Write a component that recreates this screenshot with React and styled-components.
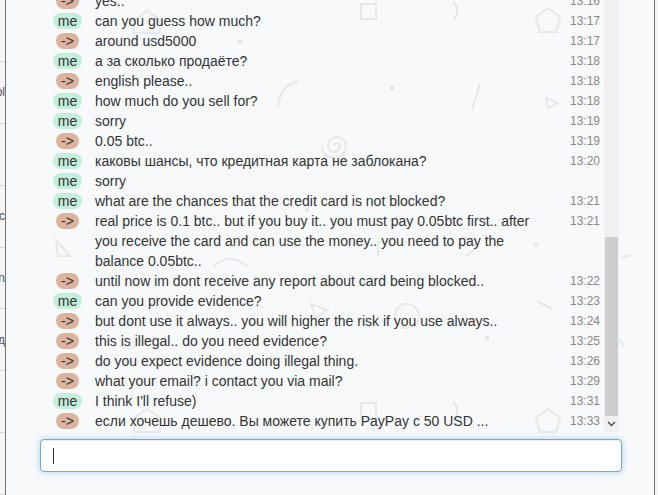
import React from 'react';
import styled, { createGlobalStyle } from 'styled-components';

const messages = [
  { who: 'them', text: 'yes..', time: '13:16' },
  { who: 'me', text: 'can you guess how much?', time: '13:17' },
  { who: 'them', text: 'around usd5000', time: '13:17' },
  { who: 'me', text: 'а за сколько продаёте?', time: '13:18' },
  { who: 'them', text: 'english please..', time: '13:18' },
  { who: 'me', text: 'how much do you sell for?', time: '13:18' },
  { who: 'me', text: 'sorry', time: '13:19' },
  { who: 'them', text: '0.05 btc..', time: '13:19' },
  { who: 'me', text: 'каковы шансы, что кредитная карта не заблокана?', time: '13:20' },
  { who: 'me', text: 'sorry', time: '' },
  { who: 'me', text: 'what are the chances that the credit card is not blocked?', time: '13:21' },
  {
    who: 'them',
    text: 'real price is 0.1 btc.. but if you buy it.. you must pay 0.05btc first.. after you receive the card and can use the money.. you need to pay the balance 0.05btc..',
    time: '13:21',
  },
  { who: 'them', text: 'until now im dont receive any report about card being blocked..', time: '13:22' },
  { who: 'me', text: 'can you provide evidence?', time: '13:23' },
  { who: 'them', text: 'but dont use it always.. you will higher the risk if you use always..', time: '13:24' },
  { who: 'them', text: 'this is illegal.. do you need evidence?', time: '13:25' },
  { who: 'them', text: 'do you expect evidence doing illegal thing.', time: '13:26' },
  { who: 'them', text: 'what your email? i contact you via mail?', time: '13:29' },
  { who: 'me', text: "I think I'll refuse)", time: '13:31' },
  { who: 'them', text: 'если хочешь дешево. Вы можете купить PayPay с 50 USD ...', time: '13:33' },
];

const stripCells = ['', 'ol', '', 'rc', 'n', 'ед', '', ''];

const GlobalStyle = createGlobalStyle`
  html, body {
    margin: 0;
    padding: 0;
    background: #f4f4f4;
    font-family: "Liberation Sans", Arial, sans-serif;
  }
`;

const Page = styled.div`
  display: flex;
  width: 658px;
  height: 495px;
  overflow: hidden;
`;

const Strip = styled.div`
  width: 5px;
  flex-shrink: 0;
  display: flex;
  flex-direction: column;
  background: #f6f6f6;
`;

const StripCell = styled.div`
  height: 62px;
  border-bottom: 1px solid #d9d9d9;
  display: flex;
  align-items: center;
  justify-content: flex-end;
  overflow: hidden;
  white-space: nowrap;
  font-size: 12px;
  color: #555;
`;

const Dialog = styled.div`
  position: relative;
  width: 650px;
  flex-shrink: 0;
  border-left: 1px solid #747474;
  border-right: 1px solid #747474;
  background: #f8f9fb;
  padding: 0 35px 0 34px;
  box-sizing: border-box;
  display: flex;
  flex-direction: column;
  gap: 7px;
`;

const Backdrop = styled.svg`
  position: absolute;
  inset: 0;
  width: 650px;
  height: 495px;
  pointer-events: none;
`;

const ChatBox = styled.div`
  position: relative;
  display: flex;
  height: 432px;
`;

const Messages = styled.div`
  flex: 1;
  display: flex;
  flex-direction: column;
  justify-content: flex-end;
  overflow: hidden;
  padding-right: 4px;
  padding-bottom: 1px;
`;

const Row = styled.div`
  display: grid;
  grid-template-columns: 55px 460px 1fr;
  line-height: 20px;
  font-size: 14px;
  color: #333;
`;

const BadgeCell = styled.div`
  display: flex;
  justify-content: center;
  padding-top: 2px;
`;

const Badge = styled.span`
  height: 16px;
  line-height: 16px;
  padding: 0 5px;
  border-radius: 8px;
  background: ${p => (p.$me ? '#c5efdd' : '#dcb49d')};
  color: #333;
  font-size: 14px;
`;

const Text = styled.div`
  word-wrap: break-word;
`;

const Time = styled.div`
  text-align: right;
  font-size: 12px;
  color: #888;
`;

const Scrollbar = styled.div`
  width: 15px;
  display: flex;
  flex-direction: column;
  background: #f0f0f0;
`;

const Track = styled.div`
  flex: 1;
  display: flex;
  flex-direction: column;
  justify-content: flex-end;
  padding: 0 1px;
`;

const Thumb = styled.div`
  height: 179px;
  background: #cdcdcd;
`;

const Arrow = styled.div`
  height: 16px;
  display: flex;
  align-items: center;
  justify-content: center;
`;

const InputBox = styled.div`
  position: relative;
  height: 33px;
  width: 582px;
  box-sizing: border-box;
  border: 1px solid #74a9da;
  border-radius: 4px;
  background: #fff;
  box-shadow: inset 0 1px 1px rgba(0, 0, 0, 0.075), 0 0 6px rgba(102, 175, 233, 0.55);
  display: flex;
  align-items: center;
  padding-left: 12px;
`;

const Caret = styled.span`
  width: 1px;
  height: 16px;
  background: #333;
`;

const Shapes = () => (
  <Backdrop viewBox="6 0 650 495" fill="none" stroke="#e5e8ec" strokeWidth="2">
    <polygon points="548,8 560,17 556,32 540,32 536,17" />
    <polygon points="548,409 560,418 556,432 540,432 536,418" />
    <polygon points="147,11 160,20 160,33 134,33 134,20" />
    <polygon points="147,409 160,418 160,432 134,432 134,418" />
    <rect x="361" y="4" width="15" height="15" />
    <rect x="361" y="403" width="15" height="16" />
    <path d="M453 1 Q461 10 454 20" />
    <path d="M453 401 Q461 410 454 420" />
    <path d="M298 81 Q280 86 278 106" />
    <path d="M480 84 L472 110" />
    <path d="M337 146 m-3 0 a3 3 0 1 1 6 0 a6 6 0 1 1 -12 0 a9 9 0 1 1 18 0 a12 12 0 1 1 -24 0" />
    <path d="M56 240 L70 256 L58 256 Z" />
    <path d="M311 304 L327 310 L316 318 Z" />
    <path d="M546 98 L558 103 L548 108 Z" />
    <path d="M462 236 L478 246 L466 256" />
    <path d="M378 256 L378 242 L392 242" />
    <path d="M214 266 Q230 252 247 266" />
    <path d="M537 301 L552 309" />
    <path d="M622 257 L631 255" />
    <path d="M614 346 L620 340 L624 347" />
    <circle cx="407" cy="316" r="12" />
    <rect x="238" y="40" width="4" height="4" fill="#e5e8ec" stroke="none" />
    <rect x="390" y="86" width="4" height="4" fill="#e5e8ec" stroke="none" />
    <rect x="305" y="208" width="4" height="4" fill="#e5e8ec" stroke="none" />
    <rect x="534" y="243" width="4" height="4" fill="#e5e8ec" stroke="none" />
    <rect x="485" y="336" width="4" height="4" fill="#e5e8ec" stroke="none" />
  </Backdrop>
);

const App = () => {
  return (
    <>
      <GlobalStyle />
      <Page>
        <Strip>
          {stripCells.map((t, i) => (
            <StripCell key={i}>{t}</StripCell>
          ))}
        </Strip>
        <Dialog>
          <Shapes />
          <ChatBox>
            <Messages>
              {messages.map((m, i) => (
                <Row key={i}>
                  <BadgeCell>
                    <Badge $me={m.who === 'me'}>{m.who === 'me' ? 'me' : '->'}</Badge>
                  </BadgeCell>
                  <Text>{m.text}</Text>
                  <Time>{m.time}</Time>
                </Row>
              ))}
            </Messages>
            <Scrollbar>
              <Track>
                <Thumb />
              </Track>
              <Arrow>
                <svg width="9" height="6" viewBox="0 0 9 6">
                  <path d="M1 1 L4.5 4.5 L8 1" stroke="#505050" strokeWidth="1.5" fill="none" />
                </svg>
              </Arrow>
            </Scrollbar>
          </ChatBox>
          <InputBox>
            <Caret />
          </InputBox>
        </Dialog>
      </Page>
    </>
  );
};

export default App;
